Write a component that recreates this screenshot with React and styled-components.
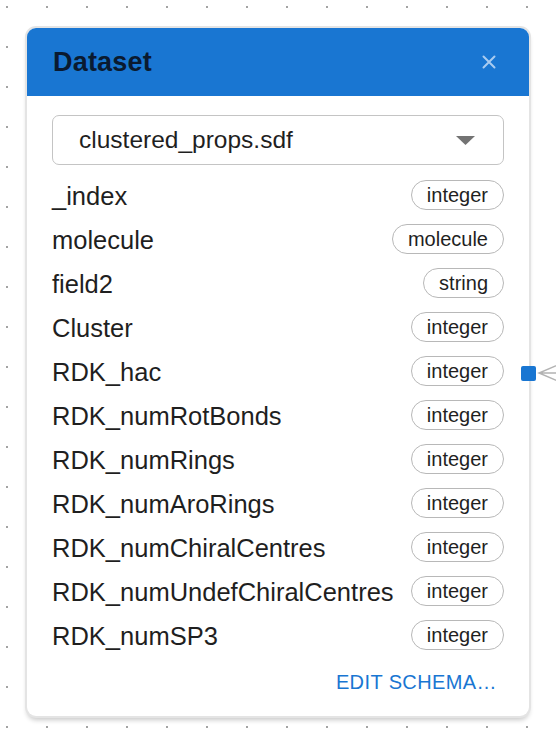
import React from "react";
import styled, { createGlobalStyle } from "styled-components";

const GlobalStyle = createGlobalStyle`
  html, body {
    margin: 0;
    padding: 0;
    background: #ffffff;
  }
  body {
    font-family: "Liberation Sans", Arial, Helvetica, sans-serif;
  }
`;

const Canvas = styled.div`
  width: 556px;
  height: 748px;
  overflow: hidden;
  box-sizing: border-box;
  padding: 28px 0 0 27px;
  background-color: #ffffff;
  background-image: radial-gradient(circle, #a3a3a3 0.9px, transparent 1.4px);
  background-size: 40px 40px;
  background-position: -13px -13px;
`;

const Card = styled.section`
  width: 502px;
  background: #ffffff;
  border-radius: 9px;
  box-shadow: 0 0 0 2px #e4e4e4, 0 4px 5px rgba(0, 0, 0, 0.22);
  position: relative;
`;

const Header = styled.header`
  height: 68px;
  background: #1976d2;
  border-radius: 9px 9px 0 0;
  display: flex;
  align-items: center;
  justify-content: space-between;
  padding: 0 32px 0 26px;
`;

const Title = styled.h2`
  margin: 0;
  font-size: 27px;
  font-weight: 700;
  color: #0a1a30;
  letter-spacing: 0.2px;
`;

const CloseButton = styled.button`
  border: none;
  background: transparent;
  padding: 0;
  width: 16px;
  height: 16px;
  display: flex;
  align-items: center;
  justify-content: center;
  cursor: pointer;
`;

const Body = styled.div`
  padding: 19px 25px 14px 25px;
  display: flex;
  flex-direction: column;
`;

const Select = styled.div`
  height: 50px;
  box-sizing: border-box;
  border: 1.5px solid #c4c4c4;
  border-radius: 7px;
  display: flex;
  align-items: center;
  justify-content: space-between;
  padding: 0 28px 0 26px;
  font-size: 24.5px;
  color: #1f1f1f;
  margin-bottom: 9px;
`;

const FieldList = styled.ul`
  list-style: none;
  margin: 0;
  padding: 0;
  display: flex;
  flex-direction: column;
`;

const FieldRow = styled.li`
  position: relative;
  height: 44px;
  display: flex;
  align-items: center;
  justify-content: space-between;
  font-size: 25.5px;
  color: #1f1f1f;
`;

const TypeChip = styled.span`
  height: 30px;
  box-sizing: border-box;
  border: 1.7px solid #b8b8b8;
  border-radius: 15px;
  padding: 0 15px;
  display: inline-flex;
  align-items: center;
  font-size: 20px;
  color: #1f1f1f;
  margin-top: -2px;
`;

const Handle = styled.span`
  position: absolute;
  right: -32px;
  top: 50%;
  width: 15px;
  height: 15px;
  margin-top: -6px;
  background: #1976d2;
  border-radius: 2px;
`;

const EdgeMarker = styled.svg`
  position: absolute;
  left: 484px;
  top: 50%;
  margin-top: -9px;
`;

const Footer = styled.div`
  display: flex;
  justify-content: flex-end;
  padding-top: 5px;
`;

const TextButton = styled.button`
  border: none;
  background: transparent;
  color: #1976d2;
  font-family: "Liberation Sans", Arial, sans-serif;
  font-size: 20px;
  letter-spacing: 0.4px;
  text-transform: uppercase;
  padding: 8px 7px;
  cursor: pointer;
`;

const fields = [
  ["_index", "integer"],
  ["molecule", "molecule"],
  ["field2", "string"],
  ["Cluster", "integer"],
  ["RDK_hac", "integer", true],
  ["RDK_numRotBonds", "integer"],
  ["RDK_numRings", "integer"],
  ["RDK_numAroRings", "integer"],
  ["RDK_numChiralCentres", "integer"],
  ["RDK_numUndefChiralCentres", "integer"],
  ["RDK_numSP3", "integer"],
];

export default function App() {
  return (
    <>
      <GlobalStyle />
      <Canvas>
        <Card>
          <Header>
            <Title>Dataset</Title>
            <CloseButton aria-label="close">
              <svg width="14" height="14" viewBox="0 0 14 14">
                <path
                  d="M1.5 1.5 L12.5 12.5 M12.5 1.5 L1.5 12.5"
                  stroke="#a9cbf0"
                  strokeWidth="2"
                  strokeLinecap="round"
                />
              </svg>
            </CloseButton>
          </Header>
          <Body>
            <Select>
              <span>clustered_props.sdf</span>
              <svg width="19" height="9" viewBox="0 0 19 9">
                <path d="M0 0 L19 0 L9.5 9 Z" fill="#737373" />
              </svg>
            </Select>
            <FieldList>
              {fields.map(([name, type, connected]) => (
                <FieldRow key={name}>
                  <span>{name}</span>
                  <TypeChip>{type}</TypeChip>
                  {connected && (
                    <>
                      <Handle />
                      <EdgeMarker width="24" height="20" viewBox="0 0 24 20">
                        <path
                          d="M24 1 L3 10 L24 19 M3 10 L24 10"
                          fill="none"
                          stroke="#b3b3b3"
                          strokeWidth="1.5"
                        />
                      </EdgeMarker>
                    </>
                  )}
                </FieldRow>
              ))}
            </FieldList>
            <Footer>
              <TextButton>Edit schema…</TextButton>
            </Footer>
          </Body>
        </Card>
      </Canvas>
    </>
  );
}
